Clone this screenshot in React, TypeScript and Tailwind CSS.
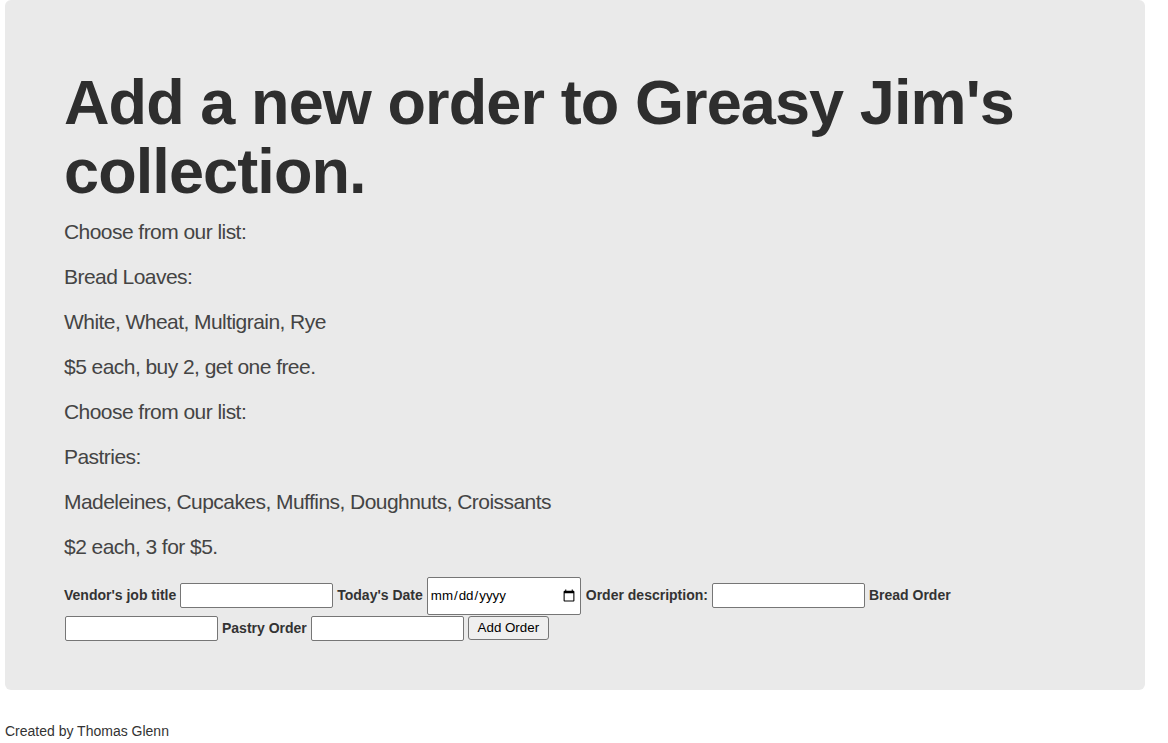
import React from 'react';

const inputCls =
  'w-[153px] h-[25px] bg-white border border-[#767676] rounded-[2px] px-[2px] text-[13.33px] text-black';

const paragraphs = [
  'Choose from our list:',
  'Bread Loaves:',
  'White, Wheat, Multigrain, Rye',
  '$5 each, buy 2, get one free.',
  'Choose from our list:',
  'Pastries:',
  'Madeleines, Cupcakes, Muffins, Doughnuts, Croissants',
  '$2 each, 3 for $5.',
];

const App: React.FC = () => {
  return (
    <div className="min-h-screen bg-white text-[#333] text-[14px] font-['Liberation_Sans',Arial,sans-serif]">
      {/* Jumbotron */}
      <div className="ml-[5px] w-[1140px] bg-[#eaeaea] rounded-md pt-[48px] pb-[49px] pl-[59px] pr-[60px]">
        <h1 className="mt-[20px] mb-[10px] text-[63px] leading-[1.1] font-bold tracking-[-0.9px] text-[#2e2e2e]">
          Add a new order to Greasy Jim's collection.
        </h1>

        {paragraphs.map((p, i) => (
          <p key={i} className="mb-[15px] text-[21px] leading-[30px] font-light tracking-[-0.55px] text-[#444]">
            {p}
          </p>
        ))}

        {/* Order form */}
        <form className="flex flex-wrap items-center gap-x-[4px] gap-y-[1px]" onSubmit={(e) => e.preventDefault()}>
          <label className="font-bold">Vendor's job title</label>
          <input type="text" className={inputCls} />
          <label className="font-bold">Today's Date</label>
          <input
            type="date"
            className="w-[154px] h-[38px] bg-white border border-[#767676] rounded-[2px] px-[2px] text-[13.33px] text-black"
          />
          <label className="font-bold ml-[1px]">Order description:</label>
          <input type="text" className={inputCls} />
          <label className="font-bold">Bread Order</label>
          <input type="text" className={`${inputCls} ml-[1px]`} />
          <label className="font-bold">Pastry Order</label>
          <input type="text" className={inputCls} />
          <button
            type="submit"
            className="h-[24px] w-[81px] bg-[#efefef] border border-[#767676] rounded-[3px] text-[13.33px] text-black"
          >
            Add Order
          </button>
        </form>
      </div>

      {/* Footer */}
      <p className="mt-[31px] ml-[5px] leading-[20px]">Created by Thomas Glenn</p>
    </div>
  );
};

export default App;
